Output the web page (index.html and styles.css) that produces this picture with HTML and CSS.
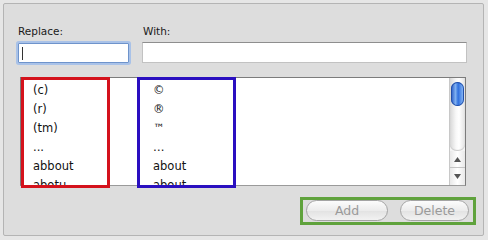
FILE: index.html
```html
<!DOCTYPE html>
<html>
<head>
<meta charset="utf-8">
<link rel="stylesheet" href="styles.css">
</head>
<body>
<div class="panel">
  <div class="fields">
    <div class="label">Replace:</div>
    <div class="label">With:</div>
    <div class="input focus"><span class="caret"></span></div>
    <div class="input"></div>
  </div>
  <div class="list">
    <div class="rows">
      <div class="row"><span class="c1">(c)</span><span class="c2">©</span></div>
      <div class="row"><span class="c1">(r)</span><span class="c2">®</span></div>
      <div class="row"><span class="c1">(tm)</span><span class="c2">™</span></div>
      <div class="row"><span class="c1">...</span><span class="c2">…</span></div>
      <div class="row"><span class="c1">abbout</span><span class="c2">about</span></div>
      <div class="row"><span class="c1">abotu</span><span class="c2">about</span></div>
    </div>
    <div class="scroll">
      <div class="track"><div class="thumb"></div></div>
      <div class="arrow up"><svg width="9" height="7" viewBox="0 0 9 7"><path d="M4.5 1 L8 6 L1 6 Z" fill="#555"/></svg></div>
      <div class="arrow down"><svg width="9" height="7" viewBox="0 0 9 7"><path d="M1 1 L8 1 L4.5 6 Z" fill="#555"/></svg></div>
    </div>
    <div class="mark red"></div>
    <div class="mark blue"></div>
  </div>
  <div class="actions">
    <div class="btn add">Add</div>
    <div class="btn del">Delete</div>
  </div>
</div>
</body>
</html>
```
FILE: styles.css
```css
html, body { margin: 0; padding: 0; }
body {
  background: #e6e6e6;
  width: 488px;
  height: 240px;
  overflow: hidden;
  font-family: "DejaVu Sans", "Lucida Grande", sans-serif;
}
.panel {
  margin: 3px 0 0 3px;
  width: 479px;
  height: 231px;
  border: 1px solid #b4b4b4;
  border-radius: 2px;
  background: #dddddd;
  box-sizing: content-box;
  display: flex;
  flex-direction: column;
}
.fields {
  display: grid;
  grid-template-columns: 113px 325px;
  column-gap: 12px;
  row-gap: 4px;
  padding: 20px 0 0 13px;
}
.label {
  font-size: 10.5px;
  line-height: 14px;
  color: #1a1a1a;
  padding-left: 1px;
}
.input {
  height: 21px;
  box-sizing: border-box;
  background: #fff;
  border: 1px solid #c2c2c2;
  border-top-color: #8e8e8e;
}
.input.focus {
  margin: 1px 1px 0 1px;
  height: 20px;
  border: 1px solid #6e93cb;
  box-shadow: 0 0 0 2px #a9c2e8;
  border-radius: 1px;
  padding: 3px 0 0 3px;
}
.caret {
  display: block;
  width: 1px;
  height: 13px;
  background: #333;
}
.list {
  position: relative;
  margin: 14px 0 0 16px;
  width: 446px;
  height: 109px;
  box-sizing: border-box;
  border: 1px solid #7c7c7c;
  border-bottom-color: #9a9a9a;
  background: #fff;
  display: flex;
  overflow: visible;
}
.rows {
  flex: 1;
  overflow: hidden;
  padding-top: 3px;
}
.row {
  display: flex;
  height: 19px;
  line-height: 19px;
  font-size: 11.5px;
  color: #111;
}
.c1 { width: 120px; padding-left: 12px; }
.c2 { }
.scroll {
  width: 15px;
  border-left: 1px solid #c8c8c8;
  display: flex;
  flex-direction: column;
  background: #f4f4f4;
}
.track {
  flex: 1;
  background: linear-gradient(to right, #d8d8d8, #f8f8f8 40%, #ffffff 60%, #e2e2e2);
  border-bottom-left-radius: 7px 6px;
  border-bottom-right-radius: 7px 6px;
  padding-top: 4px;
  box-shadow: inset 0 -1px 1px #c8c8c8;
}
.thumb {
  margin: 0 1px;
  height: 24px;
  border-radius: 7px;
  background: linear-gradient(to right, #2456c4, #7fb0f0 35%, #2f6fde 55%, #94c2f8);
  box-shadow: inset 0 0 0 1px #2450a8;
}
.arrow {
  height: 16px;
  display: flex;
  align-items: center;
  justify-content: center;
  background: linear-gradient(to right, #e8e8e8, #ffffff 50%, #e8e8e8);
}
.arrow.up { border-bottom: 1px solid #c4c4c4; height: 16px; }
.arrow.down { height: 17px; }
.mark {
  position: absolute;
  top: -1px;
  border: 3px solid;
  box-sizing: border-box;
  pointer-events: none;
}
.mark.red { left: 0px; width: 89px; height: 111px; border-color: #d4121c; }
.mark.blue { left: 116px; width: 99px; height: 111px; border-color: #2a0fc0; }
.actions {
  align-self: flex-end;
  margin: 11px 7px 0 0;
  border: 3px solid #5fa23c;
  padding: 0 4px 0 3px;
  display: flex;
  gap: 12px;
  height: 22px;
}
.btn {
  height: 21px;
  box-sizing: border-box;
  border: 1px solid #a4a4a4;
  border-radius: 11px;
  background: linear-gradient(#fcfcfc, #ececec 50%, #e2e2e2 51%, #f2f2f2);
  color: #9a9a9a;
  font-size: 12.5px;
  line-height: 19px;
  text-align: center;
}
.btn.add { width: 82px; }
.btn.del { width: 69px; }
```
